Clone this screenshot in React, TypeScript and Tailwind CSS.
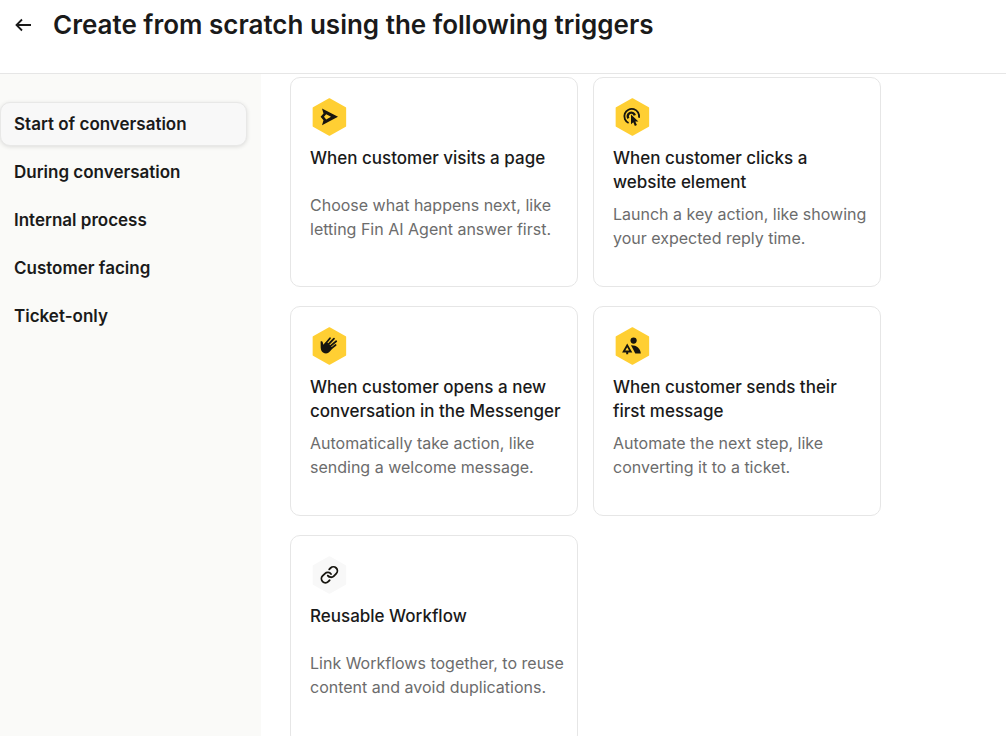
import React, { useState } from 'react';

interface Trigger {
  title: string;
  description: string;
  icon: React.ReactNode;
  muted?: boolean;
}

const categories = [
  'Start of conversation',
  'During conversation',
  'Internal process',
  'Customer facing',
  'Ticket-only',
];

const SendIcon = () => (
  <path fillRule="evenodd" d="M12 10.4 28 18.8 12 27.2l1.5-5-2.9-3.4 2.9-3.4zM14 18.8l2.2 2.6 4.8-2.6-4.8-2.6z" />
);

const ClickIcon = () => (
  <>
    <path fill="none" stroke="currentColor" strokeWidth="1.8" d="M15.6 25A7.4 7.4 0 1 1 26 19.8" />
    <path fill="none" stroke="currentColor" strokeWidth="2.4" d="M15.4 20.4A3.6 3.6 0 1 1 21.8 17.4" />
    <path d="M18 16.6v9.6l2.3-1.9 1.6 3.6 2-1-1.6-3.3h3.1z" />
  </>
);

const HandIcon = () => (
  <>
    <path d="M10.6 14.4c.9-.5 2 0 2.200 1l.5 2.300 3.200-3 6 6-1.300 2c-1.600 2.700-4 4.300-6.800 3.600-2.800-.8-3.600-3.200-3.700-5.700z" />
    <path fill="none" stroke="currentColor" strokeWidth="1.8" strokeLinecap="round" d="m14.6 17.8 5.4-6.6M16.8 19l7.2-7.4M18.8 20.4l7.4-6.1M20.2 22.4l5.4-4.4" />
  </>
);

const PeopleIcon = () => (
  <>
    <circle cx="20.6" cy="13.6" r="3.1" />
    <path d="M18 18.3c5.400-.2 9.400 3.100 9.800 8.200h-5.500z" />
    <path fillRule="evenodd" d="m14.2 16.5 5.1 8.9h-4.1v1.9h-2v-1.9H9.1zM14.2 20.2l-1.9 3.4h3.8z" />
  </>
);

const LinkIcon = () => (
  <g fill="none" stroke="currentColor" strokeWidth="2.3" strokeLinecap="round" strokeLinejoin="round" transform="translate(9.8 9.2) scale(.8)">
    <path d="M10 13a5 5 0 0 0 7.54.54l3-3a5 5 0 0 0-7.07-7.07l-1.72 1.71" />
    <path d="M14 11a5 5 0 0 0-7.54-.54l-3 3a5 5 0 0 0 7.07 7.07l1.71-1.71" />
  </g>
);

const triggers: Trigger[] = [
  {
    title: 'When customer visits a page',
    description: 'Choose what happens next, like letting Fin AI Agent answer first.',
    icon: <SendIcon />,
  },
  {
    title: 'When customer clicks a website element',
    description: 'Launch a key action, like showing your expected reply time.',
    icon: <ClickIcon />,
  },
  {
    title: 'When customer opens a new conversation in the Messenger',
    description: 'Automatically take action, like sending a welcome message.',
    icon: <HandIcon />,
  },
  {
    title: 'When customer sends their first message',
    description: 'Automate the next step, like converting it to a ticket.',
    icon: <PeopleIcon />,
  },
  {
    title: 'Reusable Workflow',
    description: 'Link Workflows together, to reuse content and avoid duplications.',
    icon: <LinkIcon />,
    muted: true,
  },
];

const TriggerCard: React.FC<{ trigger: Trigger }> = ({ trigger }) => (
  <button
    type="button"
    className="flex min-h-[210px] flex-col items-start rounded-[10px] border border-[#e6e6e6] bg-white py-5 pr-3 pl-[19px] text-left hover:border-gray-400"
  >
    <svg className="size-[38px] shrink-0 text-[#17150f]" viewBox="0 0 38 38" fill="currentColor" aria-hidden="true">
      <path
        className={trigger.muted ? 'fill-[#f8f8f8] stroke-[#f8f8f8]' : 'fill-[#ffcf33] stroke-[#ffcf33]'}
        strokeWidth="1.5"
        strokeLinejoin="round"
        d="M19.4 1 35.4 10v18L19.4 37 3.4 28V10z"
      />
      {trigger.icon}
    </svg>
    <span className="mt-[10px] min-h-[39px] text-[17px] leading-6 font-medium text-[#1a1a1a]">{trigger.title}</span>
    <span className="mt-2 text-base leading-6 text-[#6c6c6c]">{trigger.description}</span>
  </button>
);

export default function App() {
  const [active, setActive] = useState(categories[0]);

  return (
    <div className="flex h-screen flex-col overflow-hidden bg-white font-['Inter',sans-serif] text-[#1a1a1a]">
      <header className="flex shrink-0 items-start gap-5 border-b border-[#e6e6e6] px-[13px] pt-[9px] pb-8">
        <button type="button" aria-label="Back" className="flex h-8 items-center">
          <svg className="size-5" viewBox="0 0 20 20" fill="none" stroke="currentColor" strokeWidth="1.8" aria-hidden="true">
            <path d="M18 10H3.5M9 4.5 3.5 10 9 15.5" />
          </svg>
        </button>
        <h1 className="text-[26px] leading-8 font-semibold">Create from scratch using the following triggers</h1>
      </header>

      <div className="flex min-h-0 flex-1">
        <nav className="flex w-[261px] shrink-0 flex-col gap-1 bg-[#fafaf8] py-7 pr-[14px]">
          {categories.map(category => (
            <button
              key={category}
              type="button"
              onClick={() => setActive(category)}
              className={`h-11 rounded-[10px] border px-[13px] pt-px text-left text-[17px] font-semibold ${
                category === active ? 'border-[#e8e8e7] bg-[#f8f8f8] shadow-[0_1px_4px_rgba(0,0,0,0.12)]' : 'border-transparent'
              }`}
            >
              {category}
            </button>
          ))}
        </nav>

        <main className="min-w-0 flex-1 overflow-hidden pt-[3px] pr-[125px] pl-[29px]">
          <div className="grid grid-cols-2 gap-x-[15px] gap-y-[19px]">
            {triggers.map(trigger => (
              <TriggerCard key={trigger.title} trigger={trigger} />
            ))}
          </div>
        </main>
      </div>
    </div>
  );
}
